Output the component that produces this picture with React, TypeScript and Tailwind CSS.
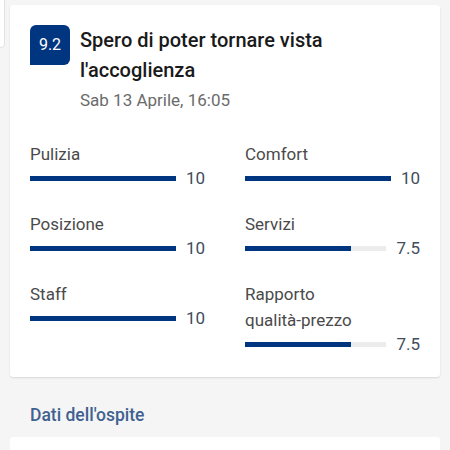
const ratings = [
  { label: "Pulizia", value: 10 },
  { label: "Comfort", value: 10 },
  { label: "Posizione", value: 10 },
  { label: "Servizi", value: 7.5 },
  { label: "Staff", value: 10 },
  { label: "Rapporto\nqualità-prezzo", value: 7.5 },
];

function RatingRow({ label, value }: { label: string; value: number }) {
  return (
    <div className="flex flex-col">
      <div className="whitespace-pre-line text-[17px] leading-[26px] text-[#4a4a4a]">{label}</div>
      <div className="flex h-[22px] items-center gap-[10px]">
        <div className="h-[5px] flex-1 bg-[#ececec]">
          <div className="h-full bg-[#003580]" style={{ width: `${value * 10}%` }} />
        </div>
        <span className="text-[17px] leading-none text-[#3f4d5b]">{value === 10 ? "10" : value.toFixed(1)}</span>
      </div>
    </div>
  );
}

export default function App() {
  return (
    <div
      className="relative h-[450px] w-[450px] overflow-hidden bg-[#f5f5f5] pt-[5px]"
      style={{ fontFamily: "Roboto, 'Liberation Sans', sans-serif" }}
    >
      {/* edge of the card behind */}
      <div className="absolute left-[-10px] top-[-10px] h-[58px] w-[15px] rounded-br-[4px] border border-[#e2e2e2] bg-white" />

      <div className="mx-[10px] rounded-[3px] bg-white px-[20px] pb-[22px] pt-[20px] shadow-[0_1px_2px_rgba(0,0,0,0.12)]">
        <div className="flex gap-[10px]">
          <div className="flex h-[40px] w-[40px] shrink-0 items-center justify-center rounded-[6px] rounded-bl-none bg-[#003580] text-[16px] text-white">
            9.2
          </div>
          <div className="flex flex-col">
            <div className="text-[20px] font-medium leading-[30px] text-[#1a1a1a]">
              Spero di poter tornare vista
              <br />
              l'accoglienza
            </div>
            <div className="mt-[1px] text-[17px] leading-[28px] text-[#6b6b6b]">Sab 13 Aprile, 16:05</div>
          </div>
        </div>

        <div className="mt-[27px] grid grid-cols-2 gap-x-[40px] gap-y-[22px]">
          {ratings.map((r) => (
            <RatingRow key={r.label} label={r.label} value={r.value} />
          ))}
        </div>
      </div>

      <div className="px-[30px] pt-[25px] text-[17.5px] font-medium leading-[26px] text-[#3f6190]">Dati dell'ospite</div>
      <div className="mx-[10px] mt-[9px] h-[40px] rounded-[3px] bg-white" />
    </div>
  );
}
